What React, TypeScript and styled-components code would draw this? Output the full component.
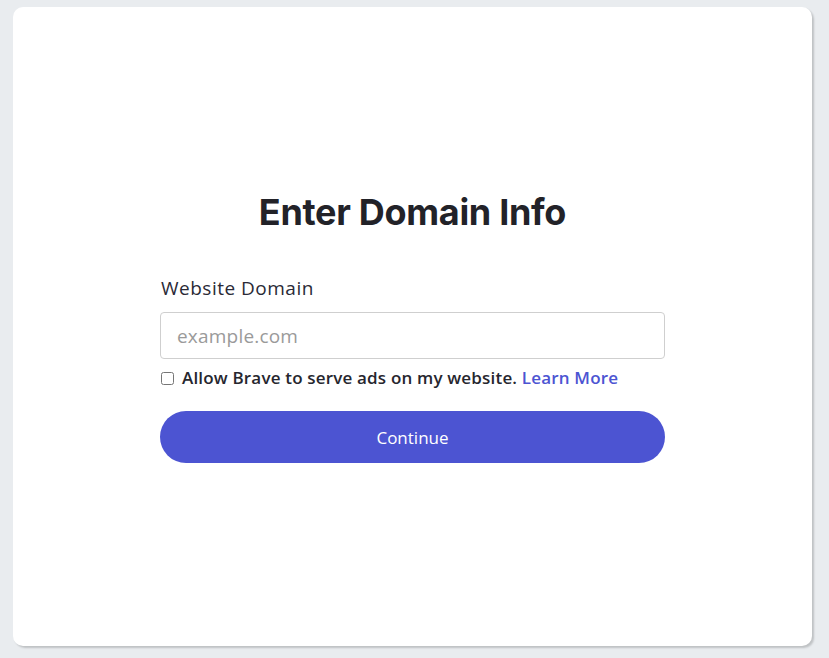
import { createGlobalStyle } from 'styled-components'
import styled from 'styled-components'

const GlobalStyle = createGlobalStyle`
  html, body {
    margin: 0;
    padding: 0;
    background: #e9ecef;
  }
  body {
    font-family: 'Open Sans', 'Noto Sans', sans-serif;
  }
`

const App = () => {
  return (
    <>
      <GlobalStyle />
      <Page>
        <Card>
          <Form onSubmit={(e) => e.preventDefault()}>
            <Title>Enter Domain Info</Title>
            <Label htmlFor='domain'>Website Domain</Label>
            <Input id='domain' type='text' placeholder='example.com' />
            <CheckRow>
              <input type='checkbox' />
              <span>
                Allow Brave to serve ads on my website. <a href='#'>Learn More</a>
              </span>
            </CheckRow>
            <Button type='submit'>Continue</Button>
          </Form>
        </Card>
      </Page>
    </>
  )
}

export default App

const Page = styled.div`
  box-sizing: border-box;
  width: 829px;
  height: 658px;
  padding: 7px 17px 12px 13px;
`

const Card = styled.div`
  display: flex;
  align-items: center;
  justify-content: center;
  height: 100%;
  background: #fff;
  border-radius: 10px;
  box-shadow: 2px 2px 2px rgba(0, 0, 0, 0.18);
`

const Form = styled.form`
  display: flex;
  flex-direction: column;
  width: 505px;
`

const Title = styled.h1`
  margin: 0 0 41px;
  text-align: center;
  font-family: 'Inter', 'Noto Sans', sans-serif;
  font-size: 36px;
  font-weight: 700;
  letter-spacing: -0.3px;
  color: #222228;
`

const Label = styled.label`
  font-size: 19px;
  letter-spacing: 0.5px;
  line-height: 26px;
  color: #2a2a36;
  margin-bottom: 11px;
  margin-left: 1px;
`

const Input = styled.input`
  box-sizing: border-box;
  height: 47px;
  padding: 0 16px;
  border: 1px solid #cfcfcf;
  border-radius: 4px;
  font-family: inherit;
  font-size: 19px;
  letter-spacing: 0.2px;
  color: #333;
  outline: none;

  &::placeholder {
    color: #9a9a9a;
  }
`

const CheckRow = styled.label`
  display: flex;
  align-items: center;
  gap: 8px;
  margin-top: 8px;
  font-size: 17px;
  font-weight: 600;
  letter-spacing: 0.18px;
  line-height: 22px;
  color: #26262e;

  input {
    margin: 0 0 0 1px;
    width: 13px;
    height: 13px;
  }

  a {
    color: #4c54d2;
    text-decoration: none;
  }
`

const Button = styled.button`
  margin-top: 22px;
  height: 52px;
  border: none;
  border-radius: 26px;
  background: #4c54d2;
  color: #fff;
  font-family: inherit;
  font-size: 17px;
  cursor: pointer;
`
